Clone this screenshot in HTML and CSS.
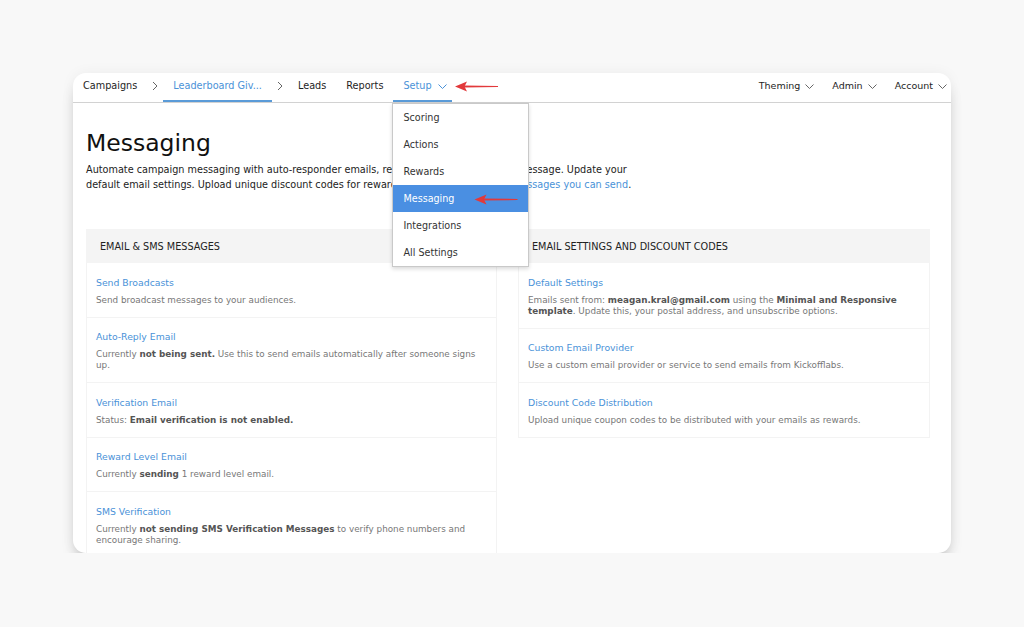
FILE: index.html
```html
<!DOCTYPE html>
<html lang="en">

<head>
    <meta charset="UTF-8">
    <meta name="viewport" content="width=device-width, initial-scale=1.0">
    <title>Messaging</title>
    <link rel="stylesheet" href="styles.css">
</head>

<body>
    <div class="window">
        <nav class="topnav">
            <div class="nav-left">
                <a class="nav-item" href="#">Campaigns</a>
                <span class="sep"><svg width="6" height="10" viewBox="0 0 6 10"><polyline points="1,1 5,5 1,9" /></svg></span>
                <a class="nav-item active" href="#">Leaderboard Giv...</a>
                <span class="sep"><svg width="6" height="10" viewBox="0 0 6 10"><polyline points="1,1 5,5 1,9" /></svg></span>
                <a class="nav-item" href="#">Leads</a>
                <a class="nav-item" href="#">Reports</a>
                <div class="nav-drop">
                    <a class="nav-item active" href="#">Setup <svg class="caret" width="9" height="5" viewBox="0 0 9 5"><polyline points="0.5,0.5 4.5,4.5 8.5,0.5" /></svg></a>
                    <ul class="menu">
                        <li>Scoring</li>
                        <li>Actions</li>
                        <li>Rewards</li>
                        <li class="current">Messaging</li>
                        <li>Integrations</li>
                        <li>All Settings</li>
                    </ul>
                </div>
            </div>
            <div class="nav-right">
                <a class="nav-item" href="#">Theming <svg class="caret" width="9" height="5" viewBox="0 0 9 5"><polyline points="0.5,0.5 4.5,4.5 8.5,0.5" /></svg></a>
                <a class="nav-item" href="#">Admin <svg class="caret" width="9" height="5" viewBox="0 0 9 5"><polyline points="0.5,0.5 4.5,4.5 8.5,0.5" /></svg></a>
                <a class="nav-item" href="#">Account <svg class="caret" width="9" height="5" viewBox="0 0 9 5"><polyline points="0.5,0.5 4.5,4.5 8.5,0.5" /></svg></a>
            </div>
        </nav>

        <!-- red pointers -->
        <svg class="pointer pointer-nav" width="43" height="11" viewBox="0 0 43 11">
            <path d="M0 5.5 L12 0.6 L9.5 5.5 L12 10.4 Z" />
            <path d="M9 4.4 L43 4.9 L43 6.1 L9 6.6 Z" />
        </svg>
        <svg class="pointer pointer-menu" width="44" height="11" viewBox="0 0 43 11">
            <path d="M0 5.5 L12 0.6 L9.5 5.5 L12 10.4 Z" />
            <path d="M9 4.4 L43 4.9 L43 6.1 L9 6.6 Z" />
        </svg>

        <main class="content">
            <h1>Messaging</h1>
            <p class="intro"><span>Automate campaign messaging with auto-responder emails, reward emails, and an SMS message. Update your</span><br>
                <span>default email settings. Upload unique discount codes for rewards. Learn more about all</span> <a href="#">messages you can send</a>.</p>

            <div class="panels">
                <section class="panel">
                    <h2 class="panel-head">EMAIL &amp; SMS MESSAGES</h2>
                    <div class="panel-body">
                        <div class="row">
                            <a class="row-title" href="#">Send Broadcasts</a>
                            <p class="row-desc">Send broadcast messages to your audiences.</p>
                        </div>
                        <div class="row">
                            <a class="row-title" href="#">Auto-Reply Email</a>
                            <p class="row-desc">Currently <b>not being sent.</b> Use this to send emails automatically after someone signs<br>up.</p>
                        </div>
                        <div class="row">
                            <a class="row-title" href="#">Verification Email</a>
                            <p class="row-desc">Status: <b>Email verification is not enabled.</b></p>
                        </div>
                        <div class="row">
                            <a class="row-title" href="#">Reward Level Email</a>
                            <p class="row-desc">Currently <b>sending</b> 1 reward level email.</p>
                        </div>
                        <div class="row">
                            <a class="row-title" href="#">SMS Verification</a>
                            <p class="row-desc">Currently <b>not sending SMS Verification Messages</b> to verify phone numbers and<br>encourage sharing.</p>
                        </div>
                    </div>
                </section>

                <section class="panel">
                    <h2 class="panel-head">EMAIL SETTINGS AND DISCOUNT CODES</h2>
                    <div class="panel-body">
                        <div class="row">
                            <a class="row-title" href="#">Default Settings</a>
                            <p class="row-desc">Emails sent from: <b>meagan.kral@gmail.com</b> using the <b>Minimal and Responsive</b><br><b>template</b>. Update this, your postal address, and unsubscribe options.</p>
                        </div>
                        <div class="row">
                            <a class="row-title" href="#">Custom Email Provider</a>
                            <p class="row-desc">Use a custom email provider or service to send emails from Kickofflabs.</p>
                        </div>
                        <div class="row">
                            <a class="row-title" href="#">Discount Code Distribution</a>
                            <p class="row-desc">Upload unique coupon codes to be distributed with your emails as rewards.</p>
                        </div>
                    </div>
                </section>
            </div>
        </main>
    </div>
</body>

</html>
```

FILE: styles.css
```css
body {
    margin: 0;
    padding: 73px 0 0 73px;
    background: #f8f8f8;
    font-family: "DejaVu Sans", Verdana, sans-serif;
    color: #222;
}

a {
    text-decoration: none;
}

.window {
    position: relative;
    width: 878px;
    height: 480px;
    background: #fff;
    border-radius: 13px;
    overflow: hidden;
    box-shadow: 0 11px 16px -6px rgba(0, 0, 0, 0.3), 0 0 14px rgba(0, 0, 0, 0.05);
}

/* top navigation */
.topnav {
    display: flex;
    justify-content: space-between;
    height: 30px;
    box-sizing: border-box;
    border-bottom: 1px solid #d2d2d2;
    font-size: 9.7px;
}

.nav-left,
.nav-right {
    display: flex;
}

.nav-item {
    display: flex;
    align-items: flex-start;
    height: 29px;
    box-sizing: border-box;
    padding: 6px 10px 0;
    line-height: 14px;
    color: #1e1e1e;
    border-bottom: 2px solid transparent;
    white-space: nowrap;
}

.nav-item.active {
    color: #4a92d8;
    border-bottom-color: #5a9bd8;
}

.nav-right .nav-item {
    padding: 6px 4px 0 14px;
}

.nav-right {
    font-size: 9.5px;
}

.sep {
    width: 16px;
    display: flex;
    justify-content: center;
    padding-top: 8px;
    box-sizing: border-box;
}

.sep polyline,
.caret polyline {
    fill: none;
    stroke: #666;
    stroke-width: 1;
}

.caret {
    margin: 5px 0 0 5px;
}

.nav-item.active .caret polyline {
    stroke: #4a92d8;
}

.nav-item.active .caret {
    margin-left: 6px;
    margin-right: -5px;
}

/* setup dropdown */
.nav-drop {
    position: relative;
}

.menu {
    position: absolute;
    left: -1px;
    top: 30px;
    z-index: 3;
    width: 137px;
    box-sizing: border-box;
    margin: 0;
    padding: 0;
    list-style: none;
    background: #fff;
    border: 1px solid #c9c9c9;
    box-shadow: 0 2px 4px rgba(0, 0, 0, 0.15);
    font-size: 9.6px;
}

.menu li {
    height: 27px;
    line-height: 27px;
    padding-left: 10px;
    color: #333;
}

.menu li.current {
    background: #4a8fe2;
    color: #fff;
}

/* annotation arrows */
.pointer {
    position: absolute;
    z-index: 5;
    fill: #e2393b;
}

.pointer-nav {
    left: 382px;
    top: 8px;
}

.pointer-menu {
    left: 401px;
    top: 121px;
}

/* page body */
.content {
    padding: 0 21px 0 13px;
}

h1 {
    margin: 26px 0 0;
    font-size: 23.5px;
    line-height: 28px;
    font-weight: normal;
    color: #111;
}

.intro {
    width: 550px;
    margin: 5px 0 0;
    font-size: 9.7px;
    line-height: 15px;
    color: #222;
}

.intro a {
    color: #4a92d8;
}

.panels {
    display: grid;
    grid-template-columns: 411px 412px;
    gap: 21px;
    margin-top: 37px;
    align-items: start;
}

.panel-head {
    margin: 0;
    height: 34px;
    line-height: 35px;
    padding: 0 14px;
    background: #f4f4f4;
    font-size: 9.7px;
    font-weight: normal;
    color: #222;
}

.panel-body {
    border: 1px solid #f3f3f3;
    border-top: 0;
}

.row {
    padding: 12.5px 9px 11px;
    border-top: 1px solid #f3f3f3;
}

.row:first-child {
    border-top: 0;
}

.row-title {
    display: block;
    margin-bottom: 5px;
    font-size: 9.3px;
    line-height: 14px;
    color: #4a92d8;
}

.row-desc {
    margin: 0;
    font-size: 8.8px;
    line-height: 11px;
    color: #777;
}

.row-desc b {
    color: #555;
}
```
